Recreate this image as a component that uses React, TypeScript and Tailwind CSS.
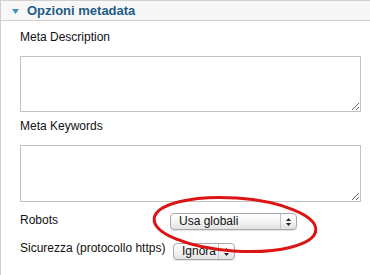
import type { ReactNode } from 'react'

function Arrows({ up = true, down = true }: { up?: boolean; down?: boolean }) {
  return (
    <svg width="7" height="10" viewBox="0 0 7 10" className="block">
      {up && <path d="M3.5 1 L6 4 L1 4 Z" fill="#222" />}
      {down && <path d="M1 6 L6 6 L3.5 9 Z" fill="#222" />}
    </svg>
  )
}

function FakeSelect({ value, width, textClass = '' }: { value: string; width: string; textClass?: string }) {
  return (
    <div
      className={`${width} flex h-[17px] items-stretch overflow-hidden rounded-[4px] border border-[#a9a9a9] bg-gradient-to-b from-white via-[#f4f4f4] to-[#e2e2e2] shadow-[0_1px_1px_rgba(0,0,0,0.12)]`}
    >
      <span className={`flex-1 truncate pl-[8px] text-[12px] leading-[15px] text-[#111] ${textClass}`}>{value}</span>
      <span className="flex w-[16px] items-center justify-center border-l border-[#c4c4c4]">
        <Arrows />
      </span>
    </div>
  )
}

function Field({ label, children }: { label: string; children: ReactNode }) {
  return (
    <div className="flex flex-col">
      <span className="text-[12px] leading-[15px] text-[#111]">{label}</span>
      {children}
    </div>
  )
}

export default function App() {
  return (
    <div className="relative h-[275px] w-[370px] overflow-hidden bg-white font-['Liberation_Sans',Arial,sans-serif]">
      <div className="flex h-full flex-col border-l border-[#cfcfcf]">
        <div className="flex h-[21px] items-center gap-[8px] border-y border-[#d0d0d0] bg-[#f7f7f7] pl-[11px]">
          <svg width="7" height="5" viewBox="0 0 7 5" className="mt-[2px]">
            <path d="M0 0 L7 0 L3.5 5 Z" fill="#3f95c0" />
          </svg>
          <span className="text-[13px] font-bold leading-[16px] text-[#1d5c86]">Opzioni metadata</span>
        </div>

        <div className="flex flex-col pl-[19px] pr-[9px] pt-[9px]">
          <Field label="Meta Description">
            <textarea className="mt-[11px] h-[56px] w-full resize-y border border-[#c2c2c2] bg-white outline-none" />
          </Field>
          <div className="mt-[7px]">
            <Field label="Meta Keywords">
              <textarea className="mt-[11px] h-[57px] w-full resize-y border border-[#c2c2c2] bg-white outline-none" />
            </Field>
          </div>

          <div className="mt-[11px] flex items-start">
            <span className="w-[150px] text-[12px] leading-[15px] text-[#111]">Robots</span>
            <FakeSelect value="Usa globali" width="w-[127px]" />
          </div>
          <div className="mt-[11px] flex items-start">
            <span className="w-[153px] text-[12px] leading-[15px] text-[#111]">Sicurezza (protocollo https)</span>
            <div className="mt-[2px]">
              <FakeSelect value="Ignora" width="w-[62px]" />
            </div>
          </div>
        </div>
      </div>

      <svg className="pointer-events-none absolute left-0 top-0" width="370" height="275" viewBox="0 0 370 275">
        <ellipse
          cx="235"
          cy="224.5"
          rx="81"
          ry="26.5"
          transform="rotate(4 235 224.5)"
          fill="none"
          stroke="#dc1414"
          strokeWidth="3"
        />
      </svg>
    </div>
  )
}
